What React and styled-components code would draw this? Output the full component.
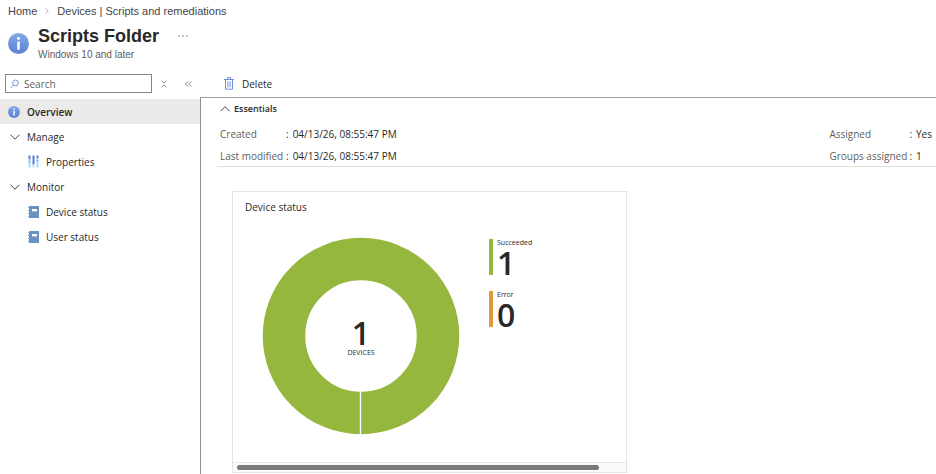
import styled, { createGlobalStyle } from 'styled-components'

const GlobalStyle = createGlobalStyle`
    * {
        box-sizing: border-box;
    }
    body {
        margin: 0;
        background: #fff;
        color: #292827;
        font-family: 'Open Sans', 'Noto Sans', sans-serif;
        font-size: 10px;
        line-height: 16px;
    }
    button, input {
        font: inherit;
        color: inherit;
    }
    h1, h2, p, dl, dd, ul {
        margin: 0;
        padding: 0;
    }
`

/* icons */
const InfoIcon = ({ size }) => (
    <svg width={size} height={size} viewBox='0 0 20 20' aria-hidden='true'>
        <defs>
            <linearGradient id='info' x1='0' y1='0' x2='0' y2='1'>
                <stop offset='0' stopColor='#83a9ea' />
                <stop offset='1' stopColor='#5b80d2' />
            </linearGradient>
        </defs>
        <circle cx='10' cy='10' r='10' fill='url(#info)' />
        <circle cx='10' cy='5.2' r='1.4' fill='#fff' />
        <rect x='8.8' y='8' width='2.4' height='8' rx='0.6' fill='#fff' />
    </svg>
)

const ChevronIcon = ({ up }) => (
    <svg width='10' height='6' viewBox='0 0 10 6' fill='none' stroke='#444' strokeWidth='1' aria-hidden='true'>
        <path d={up ? 'M0.5 5.2 5 0.7 9.5 5.2' : 'M0.5 0.7 5 5.2 9.5 0.7'} />
    </svg>
)

const SmallChevron = () => (
    <svg width='4' height='6' viewBox='0 0 4 6' fill='none' stroke='#a19f9d' strokeWidth='0.8' aria-hidden='true'>
        <path d='M0.5 0.5 3.3 3 0.5 5.5' />
    </svg>
)

const SearchIcon = () => (
    <svg width='10' height='10' viewBox='0 0 10 10' fill='none' stroke='#5a82d8' strokeWidth='0.9' aria-hidden='true'>
        <circle cx='6.2' cy='3.8' r='3.2' />
        <path d='M4 6 0.4 9.6' />
    </svg>
)

const SortIcon = () => (
    <svg width='6' height='8' viewBox='0 0 6 8' fill='none' stroke='#605e5c' strokeWidth='0.7' aria-hidden='true'>
        <path d='M0.7 0.8 3 3.1 5.3 0.8M0.7 7.2 3 4.9 5.3 7.2' />
    </svg>
)

const CollapseIcon = () => (
    <svg width='7' height='6' viewBox='0 0 7 6' fill='none' stroke='#605e5c' strokeWidth='0.7' aria-hidden='true'>
        <path d='M3.2 0.4 0.6 3 3.2 5.6M6.4 0.4 3.8 3 6.4 5.6' />
    </svg>
)

const TrashIcon = () => (
    <svg width='10' height='13' viewBox='0 0 10 13' fill='none' stroke='#6b8fe0' strokeWidth='1' aria-hidden='true'>
        <path d='M0 2.5H10M3.5 2.5V0.5H6.5V2.5M1.5 2.5V12.2H8.5V2.5' />
        <path d='M3.9 4.5V10.4M6.1 4.5V10.4' strokeWidth='1' />
    </svg>
)

const PropertiesIcon = () => (
    <svg width='11' height='13' viewBox='0 0 11 13' aria-hidden='true'>
        <path d='M0.5 0.5H2.5V4.5H0.5ZM4.5 0.5H6.5V9.5H4.5ZM8.5 0.5H10.5V3.5H8.5Z' fill='#5b7fd0' />
        <path d='M0.5 5.5H2.5V12.5H0.5ZM4.5 10H6.5V12.5H4.5ZM8.5 4.5H10.5V12.5H8.5Z' fill='#a9dcf5' />
        <path d='M0.5 5.5H2.5V7.5H0.5ZM8.5 4.5H10.5V6.5H8.5Z' fill='#83bfee' />
    </svg>
)

const BookIcon = () => (
    <svg width='11' height='12' viewBox='0 0 11 12' aria-hidden='true'>
        <rect x='1' width='10' height='12' rx='0.5' fill='#6a93c3' />
        <rect x='4' y='3' width='5' height='2.4' fill='#fff' />
        <path d='M0 1.5H2M0 4.5H2M0 7.5H2M0 10.5H2' stroke='#7f9dbf' strokeWidth='1' />
    </svg>
)

/* page */
const Page = styled.div`
    display: flex;
    flex-direction: column;
    min-height: 100vh;
`

const Header = styled.header`
    font-family: 'Liberation Sans', Arial, sans-serif;
    padding: 2px 8px 0;
`

const Breadcrumb = styled.nav`
    display: flex;
    align-items: center;
    gap: 8px;
    font-size: 11px;
    line-height: 18px;

    a {
        color: #444;
        text-decoration: none;
    }
    a:hover {
        text-decoration: underline;
    }
`

const TitleBar = styled.div`
    display: flex;
    align-items: center;
    gap: 9px;
    padding-top: 4px;
`

const Title = styled.h1`
    display: flex;
    align-items: center;
    gap: 12px;
    font-size: 18px;
    font-weight: 700;
    line-height: 24px;
`

const Subtitle = styled.p`
    color: #605e5c;
    font-size: 10px;
    line-height: 14px;
`

const IconButton = styled.button`
    display: flex;
    align-items: center;
    justify-content: center;
    width: 24px;
    height: 16px;
    padding: 0;
    border: 0;
    background: none;
    cursor: pointer;
`

const Body = styled.div`
    display: flex;
    flex: 1;
    padding-top: 8px;
`

const Sidebar = styled.aside`
    display: flex;
    flex-direction: column;
    flex: 0 0 200px;
`

const SidebarTools = styled.div`
    display: flex;
    align-items: center;
    height: 27px;
    padding-left: 5px;
    margin-bottom: 2px;
`

const SearchBox = styled.label`
    display: flex;
    align-items: center;
    gap: 5px;
    width: 147px;
    height: 19px;
    padding: 0 4px;
    border: 1px solid #858483;

    input {
        width: 100%;
        padding: 0;
        border: 0;
        outline: 0;
        background: none;
    }
    input::placeholder {
        color: #605e5c;
        opacity: 1;
    }
`

const NavList = styled.ul`
    list-style: none;
`

const NavItem = styled.a`
    display: flex;
    align-items: center;
    gap: 7px;
    height: 25px;
    padding-left: ${({ $nested }) => ($nested ? '28px' : '8px')};
    background: ${({ $active }) => ($active ? '#ebeae9' : 'none')};
    color: inherit;
    font-weight: ${({ $active }) => ($active ? 600 : 400)};
    text-decoration: none;
`

const NavGroup = styled.button`
    display: flex;
    align-items: center;
    gap: 7px;
    width: 100%;
    height: 25px;
    padding: 0 0 0 10px;
    border: 0;
    background: none;
    text-align: left;
    cursor: pointer;
`

const Main = styled.main`
    display: flex;
    flex-direction: column;
    flex: 1;
    min-width: 0;
`

const CommandBar = styled.div`
    display: flex;
    align-items: center;
    height: 27px;
    padding-left: 24px;
`

const Command = styled.button`
    display: flex;
    align-items: center;
    gap: 8px;
    padding: 0;
    border: 0;
    background: none;
    cursor: pointer;
`

const Pane = styled.div`
    flex: 1;
    padding-left: 16px;
    border-top: 1px solid #a3a2a1;
    border-left: 1px solid #8f8e8d;
`

const Essentials = styled.section`
    padding: 3px 0 0 3px;
    border-bottom: 1px solid #e1dfdd;
`

const EssentialsToggle = styled.button`
    display: flex;
    align-items: center;
    gap: 4px;
    padding: 0;
    border: 0;
    background: none;
    font-size: 9px;
    font-weight: 600;
    cursor: pointer;
`

const Facts = styled.div`
    display: flex;
    justify-content: space-between;
    padding-top: 7px;
`

const FactList = styled.dl`
    display: grid;
    grid-template-columns: ${({ $labelWidth }) => $labelWidth} auto;
    row-gap: 2px;
    line-height: 20px;
    padding-right: 4px;

    dt {
        color: #605e5c;
    }
    dd::before {
        content: ':';
        margin-right: 4px;
    }
`

const Card = styled.section`
    display: flex;
    flex-direction: column;
    width: 395px;
    margin: 24px 0 2px 15px;
    border: 1px solid #e3e2e1;
`

const CardTitle = styled.h2`
    padding: 7px 12px 0;
    font-size: 10px;
    font-weight: 400;
    line-height: 16px;
`

const ChartRow = styled.div`
    display: flex;
    gap: 29px;
    padding: 22px 29px 27px;
`

const Chart = styled.figure`
    display: grid;
    place-items: center;
    margin: 0;

    > * {
        grid-area: 1 / 1;
    }
`

const ChartTotal = styled.figcaption`
    display: flex;
    flex-direction: column;
    align-items: center;
    padding-top: 2px;
    font-size: 7px;
    line-height: 8px;
`

const Figure = styled.strong`
    font-size: 32px;
    font-weight: 600;
    line-height: 32px;
`

const Legend = styled.ul`
    display: flex;
    flex-direction: column;
    gap: 16px;
    padding-top: 2px;
    list-style: none;
`

const LegendItem = styled.li`
    display: flex;
    flex-direction: column;
    height: 36px;
    padding-left: 4px;
    border-left: 4px solid ${({ $color }) => $color};
    font-size: 7px;
    line-height: 8px;
`

const ScrollTrack = styled.div`
    height: 10px;
    padding: 2px 4px;
    border-top: 1px solid #e8e8e8;
    background: #fafafa;
`

const ScrollThumb = styled.div`
    width: 94%;
    height: 5px;
    border-radius: 3px;
    background: #7a7a7a;
`

const legend = [
    { name: 'Succeeded', value: 1, color: '#95b73e' },
    { name: 'Error', value: 0, color: '#dd9a3c' },
]

const Donut = () => (
    <svg width='198' height='198' viewBox='0 0 198 198' aria-hidden='true'>
        <circle cx='99' cy='99' r='77' fill='none' stroke='#95b73e' strokeWidth='42.5' />
        <path d='M98.5 154V198' stroke='#fff' strokeWidth='1.4' />
    </svg>
)

const DeviceStatusCard = () => (
    <Card>
        <CardTitle>Device status</CardTitle>
        <ChartRow>
            <Chart>
                <Donut />
                <ChartTotal>
                    <Figure>1</Figure>
                    DEVICES
                </ChartTotal>
            </Chart>
            <Legend>
                {legend.map((item) => (
                    <LegendItem key={item.name} $color={item.color}>
                        {item.name}
                        <Figure>{item.value}</Figure>
                    </LegendItem>
                ))}
            </Legend>
        </ChartRow>
        <ScrollTrack>
            <ScrollThumb />
        </ScrollTrack>
    </Card>
)

const SideMenu = () => (
    <Sidebar>
        <SidebarTools>
            <SearchBox>
                <SearchIcon />
                <input type='text' placeholder='Search' aria-label='Search' />
            </SearchBox>
            <IconButton aria-label='Expand all'><SortIcon /></IconButton>
            <IconButton aria-label='Collapse menu'><CollapseIcon /></IconButton>
        </SidebarTools>
        <NavList>
            <li><NavItem href='#overview' $active><InfoIcon size={12} />Overview</NavItem></li>
            <li>
                <NavGroup><ChevronIcon />Manage</NavGroup>
                <NavList>
                    <li><NavItem href='#properties' $nested><PropertiesIcon />Properties</NavItem></li>
                </NavList>
            </li>
            <li>
                <NavGroup><ChevronIcon />Monitor</NavGroup>
                <NavList>
                    <li><NavItem href='#device-status' $nested><BookIcon />Device status</NavItem></li>
                    <li><NavItem href='#user-status' $nested><BookIcon />User status</NavItem></li>
                </NavList>
            </li>
        </NavList>
    </Sidebar>
)

const App = () => {
    return (
        <Page>
            <GlobalStyle />
            <Header>
                <Breadcrumb aria-label='Breadcrumb'>
                    <a href='#home'>Home</a>
                    <SmallChevron />
                    <a href='#devices'>Devices | Scripts and remediations</a>
                </Breadcrumb>
                <TitleBar>
                    <InfoIcon size={21} />
                    <div>
                        <Title>
                            Scripts Folder
                            <IconButton aria-label='More'>
                                <svg width='10' height='2' viewBox='0 0 10 2' fill='#605e5c'>
                                    <circle cx='1' cy='1' r='0.7' />
                                    <circle cx='5' cy='1' r='0.7' />
                                    <circle cx='9' cy='1' r='0.7' />
                                </svg>
                            </IconButton>
                        </Title>
                        <Subtitle>Windows 10 and later</Subtitle>
                    </div>
                </TitleBar>
            </Header>
            <Body>
                <SideMenu />
                <Main>
                    <CommandBar>
                        <Command><TrashIcon />Delete</Command>
                    </CommandBar>
                    <Pane>
                        <Essentials>
                            <EssentialsToggle aria-expanded='true'><ChevronIcon up />Essentials</EssentialsToggle>
                            <Facts>
                                <FactList $labelWidth='66px'>
                                    <dt>Created</dt>
                                    <dd>04/13/26, 08:55:47 PM</dd>
                                    <dt>Last modified</dt>
                                    <dd>04/13/26, 08:55:47 PM</dd>
                                </FactList>
                                <FactList $labelWidth='80px'>
                                    <dt>Assigned</dt>
                                    <dd>Yes</dd>
                                    <dt>Groups assigned</dt>
                                    <dd>1</dd>
                                </FactList>
                            </Facts>
                        </Essentials>
                        <DeviceStatusCard />
                    </Pane>
                </Main>
            </Body>
        </Page>
    )
}

export default App
